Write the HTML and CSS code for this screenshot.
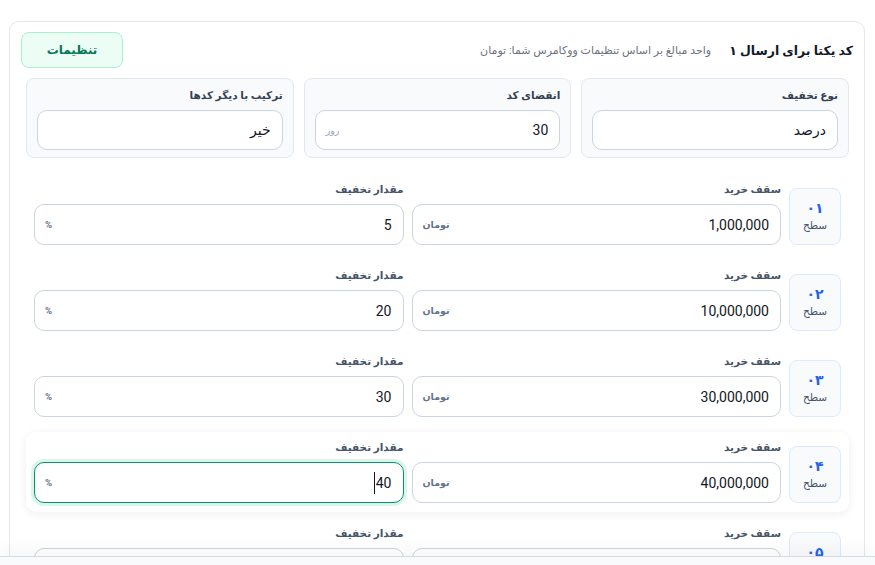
FILE: index.html
```html
<!DOCTYPE html>
<html lang="fa" dir="rtl">
<head>
<meta charset="utf-8">
<title>کد یکتا</title>
<link rel="stylesheet" href="styles.css">
</head>
<body>
<div class="card">
  <div class="header">
    <div class="titles">
      <h1 class="title">کد یکتا برای ارسال ۱</h1>
      <span class="subtitle">واحد مبالغ بر اساس تنظیمات ووکامرس شما: تومان</span>
    </div>
    <button class="btn-settings">تنظیمات</button>
  </div>

  <div class="section">
    <div class="settings">
      <div class="box">
        <div class="box-label">نوع تخفیف</div>
        <div class="field-input"><span class="val">درصد</span></div>
      </div>
      <div class="box">
        <div class="box-label">انقضای کد</div>
        <div class="field-input"><span class="val">30</span><span class="unit">روز</span></div>
      </div>
      <div class="box">
        <div class="box-label">ترکیب با دیگر کدها</div>
        <div class="field-input"><span class="val">خیر</span></div>
      </div>
    </div>

    <div class="tiers">
      <div class="tier">
        <div class="badge"><span class="num">۰۱</span><span class="lvl">سطح</span></div>
        <div class="field">
          <div class="field-label">سقف خرید</div>
          <div class="field-input"><span class="val">1,000,000</span><span class="unit">تومان</span></div>
        </div>
        <div class="field">
          <div class="field-label">مقدار تخفیف</div>
          <div class="field-input"><span class="val">5</span><span class="unit">%</span></div>
        </div>
      </div>
      <div class="tier">
        <div class="badge"><span class="num">۰۲</span><span class="lvl">سطح</span></div>
        <div class="field">
          <div class="field-label">سقف خرید</div>
          <div class="field-input"><span class="val">10,000,000</span><span class="unit">تومان</span></div>
        </div>
        <div class="field">
          <div class="field-label">مقدار تخفیف</div>
          <div class="field-input"><span class="val">20</span><span class="unit">%</span></div>
        </div>
      </div>
      <div class="tier">
        <div class="badge"><span class="num">۰۳</span><span class="lvl">سطح</span></div>
        <div class="field">
          <div class="field-label">سقف خرید</div>
          <div class="field-input"><span class="val">30,000,000</span><span class="unit">تومان</span></div>
        </div>
        <div class="field">
          <div class="field-label">مقدار تخفیف</div>
          <div class="field-input"><span class="val">30</span><span class="unit">%</span></div>
        </div>
      </div>
      <div class="tier active">
        <div class="badge"><span class="num">۰۴</span><span class="lvl">سطح</span></div>
        <div class="field">
          <div class="field-label">سقف خرید</div>
          <div class="field-input"><span class="val">40,000,000</span><span class="unit">تومان</span></div>
        </div>
        <div class="field">
          <div class="field-label">مقدار تخفیف</div>
          <div class="field-input focused"><span class="val">40<span class="caret"></span></span><span class="unit">%</span></div>
        </div>
      </div>
      <div class="tier">
        <div class="badge"><span class="num">۰۵</span><span class="lvl">سطح</span></div>
        <div class="field">
          <div class="field-label">سقف خرید</div>
          <div class="field-input"><span class="val">50,000,000</span><span class="unit">تومان</span></div>
        </div>
        <div class="field">
          <div class="field-label">مقدار تخفیف</div>
          <div class="field-input"><span class="val">50</span><span class="unit">%</span></div>
        </div>
      </div>
    </div>
  </div>
</div>
<div class="bottom-bar"></div>
</body>
</html>
```

FILE: styles.css
```css
html, body {
  margin: 0;
  padding: 0;
  height: 565px;
  overflow: hidden;
  background: #ffffff;
}

body {
  font-family: Roboto, "DejaVu Sans", sans-serif;
  color: #111827;
  padding: 21px 10px 0 9px;
  box-sizing: border-box;
}

.card {
  border: 1px solid #e2e8f0;
  border-radius: 10px;
  padding: 10px 11px 20px;
  background: #ffffff;
}

.header {
  display: flex;
  align-items: center;
  justify-content: space-between;
  height: 36px;
}

.titles {
  display: flex;
  align-items: center;
  gap: 18px;
}

.title {
  margin: 0;
  font-size: 12.5px;
  font-weight: 700;
  color: #111827;
}

.subtitle {
  font-size: 11px;
  color: #6b7280;
}

.btn-settings {
  width: 102px;
  height: 36px;
  border: 1px solid #a7f3d0;
  background: #ecfdf5;
  border-radius: 8px;
  color: #047857;
  font-family: "DejaVu Sans", sans-serif;
  font-size: 12px;
  font-weight: 700;
  padding: 0;
}

.section {
  padding: 0 4px 0 5px;
  margin-top: 10px;
}

.settings {
  display: grid;
  grid-template-columns: repeat(3, 1fr);
  gap: 10px;
}

.box {
  background: #f8fafc;
  border: 1px solid #e2e8f0;
  border-radius: 8px;
  padding: 9px 10px 7px;
}

.box-label,
.field-label {
  font-size: 10.5px;
  font-weight: 700;
  color: #475569;
  line-height: 16px;
  height: 16px;
  margin-bottom: 6px;
}

.box-label {
  color: #334155;
}

.field-input {
  height: 40px;
  box-sizing: border-box;
  border: 1px solid #cbd5e1;
  border-radius: 10px;
  background: #ffffff;
  display: flex;
  align-items: center;
  justify-content: space-between;
  padding: 0 11px 0 10px;
}

.field-input .val {
  font-size: 14px;
  color: #111827;
  display: flex;
  align-items: center;
}

.field-input .unit {
  font-size: 9.5px;
  font-weight: 700;
  color: #64748b;
}

.box .field-input .unit {
  font-weight: 400;
  color: #94a3b8;
}

.tiers {
  margin-top: 16px;
  display: flex;
  flex-direction: column;
  gap: 6px;
}

.tier {
  display: flex;
  align-items: flex-end;
  gap: 8px;
  padding: 8px 8px 9px;
  border-radius: 10px;
}

.tier .field-input {
  height: 41px;
}

.tier.active {
  box-shadow: 0 2px 10px rgba(15, 23, 42, 0.07);
}

.badge {
  width: 52px;
  height: 57px;
  flex: none;
  box-sizing: border-box;
  border: 1px solid #dbeafe;
  background: #f8fafc;
  border-radius: 8px;
  display: flex;
  flex-direction: column;
  align-items: center;
  justify-content: center;
  gap: 2px;
}

.badge .num {
  font-family: "DejaVu Sans", sans-serif;
  font-size: 14px;
  font-weight: 700;
  color: #2563eb;
  line-height: 16px;
}

.badge .lvl {
  font-size: 10.5px;
  color: #475569;
  line-height: 15px;
}

.field {
  flex: 1;
  min-width: 0;
}

.field-input.focused {
  border-color: #059669;
  box-shadow: 0 0 0 3px #dcf5ea;
}

.caret {
  display: inline-block;
  width: 1px;
  height: 22px;
  background: #111827;
  margin-right: 1px;
}

.bottom-bar {
  position: fixed;
  left: 0;
  right: 0;
  bottom: 0;
  height: 8px;
  background: #f9fafb;
  border-top: 1px solid #d6dbe2;
  box-shadow: 0 -6px 14px rgba(15, 23, 42, 0.05);
}
```
